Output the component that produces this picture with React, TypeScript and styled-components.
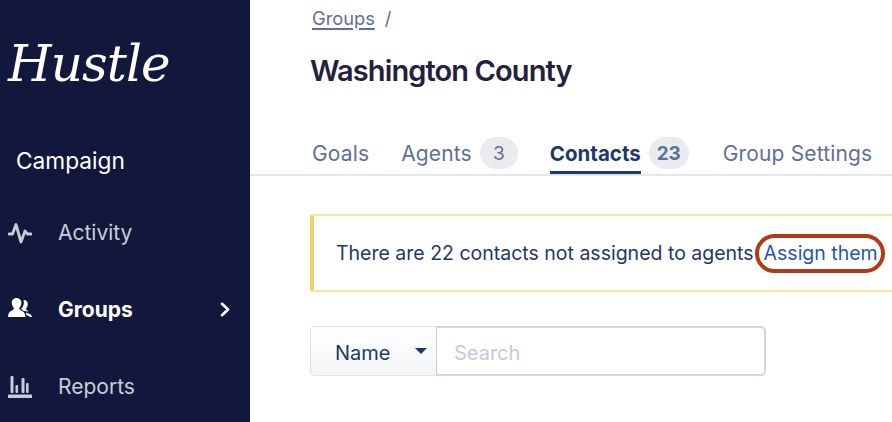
import styled, { createGlobalStyle } from "styled-components";

const GlobalStyle = createGlobalStyle`
  html, body {
    margin: 0;
    padding: 0;
    background: #fff;
  }
  body {
    font-family: "Inter", "Liberation Sans", sans-serif;
  }
`;

const ActivityIcon = () => (
  <svg width="24" height="22" viewBox="0 0 24 22" fill="none" stroke="currentColor" strokeWidth="2.8" strokeLinecap="round" strokeLinejoin="round">
    <path d="M1 12 H4.5 L8 2.5 L13 20 L17 9 L19.5 12 H23" />
  </svg>
);

const GroupsIcon = () => (
  <svg width="24" height="24" viewBox="0 0 24 24" fill="currentColor">
    <path d="M8.5 0 C5.4 0 3.6 2.4 3.8 5 C4 7.4 5 9 6 10 C6 11.6 4.4 12.4 3 13 C1.2 13.9 0.3 15.4 0 19 H17.5 C17.2 15.4 16 13.9 14.2 13 C12.8 12.4 11.2 11.6 11.2 10 C12.2 9 13.2 7.4 13.4 5 C13.6 2.4 11.6 0 8.5 0 Z" />
    <path d="M15.4 2 C18 1.7 20 3.6 19.8 6.2 C19.6 8.2 18.8 9.6 18 10.6 C18.2 12 19.4 12.6 20.6 13.4 L16 13 C14.6 12.2 13.4 11.6 13.2 10.8 C14.6 9.2 15.6 7.6 15.8 5.4 C15.9 4.2 15.8 3 15.4 2 Z" />
    <path d="M18.4 14.4 L23 16.8 L24 19 H22.4 L17.8 16.4 Z" />
  </svg>
);

const ReportsIcon = () => (
  <svg width="24" height="22" viewBox="0 0 24 22" fill="currentColor">
    <rect x="2.5" y="0" width="3" height="17" rx="1" />
    <rect x="7.5" y="9" width="2.6" height="8" rx="1" />
    <rect x="13.5" y="2" width="3" height="15" rx="1" />
    <rect x="18" y="7" width="2.6" height="10" rx="1" />
    <rect x="0" y="18.5" width="24" height="3.5" rx="0.5" />
  </svg>
);

const ChevronIcon = () => (
  <svg width="10" height="15" viewBox="0 0 10 15" fill="none" stroke="currentColor" strokeWidth="2.6" strokeLinecap="round" strokeLinejoin="round">
    <path d="M2 1.8 L8 7.5 L2 13.2" />
  </svg>
);

const NAV = [
  { label: "Activity", Icon: ActivityIcon, active: false },
  { label: "Groups", Icon: GroupsIcon, active: true },
  { label: "Reports", Icon: ReportsIcon, active: false },
];

export default function App() {
  return (
    <>
      <GlobalStyle />
      <Page>
        <Sidebar>
          <Logo>Hustle</Logo>
          <SectionTitle>Campaign</SectionTitle>
          <Nav>
            {NAV.map(({ label, Icon, active }) => (
              <NavItem key={label} $active={active}>
                <NavIcon>
                  <Icon />
                </NavIcon>
                <NavLabel>{label}</NavLabel>
                {active && <ChevronIcon />}
              </NavItem>
            ))}
          </Nav>
        </Sidebar>
        <Main>
          <Breadcrumb>
            <CrumbLink>Groups</CrumbLink>
            <span>/</span>
          </Breadcrumb>
          <Title>Washington County</Title>
          <Tabs>
            <Tab>Goals</Tab>
            <Tab>
              Agents <Count>3</Count>
            </Tab>
            <Tab>
              <ActiveLabel>Contacts</ActiveLabel> <Count $bold>23</Count>
            </Tab>
            <Tab>Group Settings</Tab>
          </Tabs>
          <Content>
            <Alert>
              There are 22 contacts not assigned to agents
              <AssignLink>Assign them</AssignLink>
            </Alert>
            <SearchRow>
              <FieldSelect>
                <span>Name</span>
                <Caret />
              </FieldSelect>
              <SearchInput placeholder="Search" readOnly />
            </SearchRow>
          </Content>
        </Main>
      </Page>
    </>
  );
}

const Page = styled.div`
  display: flex;
  width: 892px;
  height: 422px;
  overflow: hidden;
`;

const Sidebar = styled.aside`
  flex: 0 0 250px;
  box-sizing: border-box;
  background: #11183c;
  color: #fff;
  padding-top: 32px;
`;

const Logo = styled.div`
  font-family: "DejaVu Serif", serif;
  font-style: italic;
  font-weight: 300;
  font-size: 50px;
  line-height: 64px;
  letter-spacing: -0.9px;
  padding-left: 8px;
`;

const SectionTitle = styled.div`
  font-size: 22.7px;
  line-height: 28px;
  margin-top: 51px;
  padding-left: 16px;
`;

const Nav = styled.nav`
  display: flex;
  flex-direction: column;
  margin-top: 19px;
`;

const NavItem = styled.div<{ $active: boolean }>`
  display: flex;
  align-items: center;
  height: 77px;
  padding: 0 20px 0 8px;
  color: ${(p) => (p.$active ? "#fff" : "#c9ccd8")};
  font-weight: ${(p) => (p.$active ? 700 : 400)};
  font-size: 21px;
`;

const NavIcon = styled.span`
  display: flex;
  width: 50px;
`;

const NavLabel = styled.span`
  flex: 1;
`;

const Main = styled.main`
  flex: 1;
  min-width: 0;
  color: #1f3868;
`;

const Breadcrumb = styled.div`
  display: flex;
  gap: 10px;
  padding: 6px 0 0 62px;
  color: #5d7096;
  font-size: 18.3px;
  line-height: 24px;
`;

const CrumbLink = styled.span`
  text-decoration: underline;
  text-decoration-thickness: 2px;
  text-underline-offset: 3px;
`;

const Title = styled.h1`
  margin: 21px 0 0;
  padding-left: 60px;
  font-size: 29px;
  line-height: 40px;
  font-weight: 600;
  letter-spacing: -0.9px;
  color: #23213f;
`;

const Tabs = styled.div`
  display: flex;
  gap: 32px;
  margin-top: 41px;
  padding-left: 62px;
  height: 42px;
  border-bottom: 2px solid #e4e6ee;
  white-space: nowrap;
`;

const Tab = styled.div`
  display: flex;
  align-items: center;
  gap: 8px;
  height: 42px;
  color: #5d7096;
  font-size: 21px;
  letter-spacing: 0.15px;
`;

const ActiveLabel = styled.span`
  display: flex;
  align-items: center;
  height: 42px;
  box-sizing: border-box;
  padding-top: 3px;
  color: #1f3868;
  font-size: 20.5px;
  font-weight: 700;
  letter-spacing: 0;
  border-bottom: 3px solid #1f3868;
`;

const Count = styled.span<{ $bold?: boolean }>`
  display: inline-flex;
  align-items: center;
  justify-content: center;
  min-width: ${(p) => (p.$bold ? "40px" : "38px")};
  margin-right: ${(p) => (p.$bold ? "2px" : "0")};
  padding: 0 1px;
  box-sizing: border-box;
  height: 32px;
  border-radius: 16px;
  background: #e9ebee;
  color: #5d7096;
  font-size: 19px;
  letter-spacing: 0;
  font-weight: ${(p) => (p.$bold ? 700 : 400)};
`;

const Content = styled.div`
  padding: 38px 0 0 60px;
`;

const Alert = styled.div`
  display: flex;
  align-items: center;
  box-sizing: border-box;
  width: 640px;
  height: 78px;
  padding-left: 22px;
  border: 2px solid #f9e4a0;
  border-left: 4px solid #f3d069;
  border-radius: 3px;
  font-size: 19.5px;
  white-space: nowrap;
`;

const AssignLink = styled.a`
  position: relative;
  margin-left: 10px;
  color: #1f55b8;

  &::after {
    content: "";
    position: absolute;
    inset: -7px -7px -8px -9px;
    border: 4px solid #b23a16;
    border-radius: 20px;
  }
`;

const SearchRow = styled.div`
  display: flex;
  margin-top: 34px;
  width: 456px;
  height: 50px;
`;

const FieldSelect = styled.div`
  display: flex;
  align-items: center;
  justify-content: space-between;
  box-sizing: border-box;
  flex: 0 0 127px;
  padding: 0 9px 0 24px;
  border: 1px solid #dfe2e8;
  border-right: 1px solid #c9cedb;
  border-radius: 5px 0 0 5px;
  background: linear-gradient(#fff, #f3f5f8);
  font-size: 20px;

  span:first-child {
    padding-top: 3px;
  }
`;

const Caret = styled.span`
  width: 0;
  height: 0;
  border-left: 6px solid transparent;
  border-right: 6px solid transparent;
  border-top: 6px solid #1f3868;
`;

const SearchInput = styled.input`
  flex: 1;
  min-width: 0;
  box-sizing: border-box;
  padding: 3px 17px 0;
  border: 2px solid #d2d6e0;
  border-left: none;
  border-radius: 0 5px 5px 0;
  outline: none;
  font: inherit;
  font-size: 20px;

  &::placeholder {
    color: #c3cadb;
  }
`;
